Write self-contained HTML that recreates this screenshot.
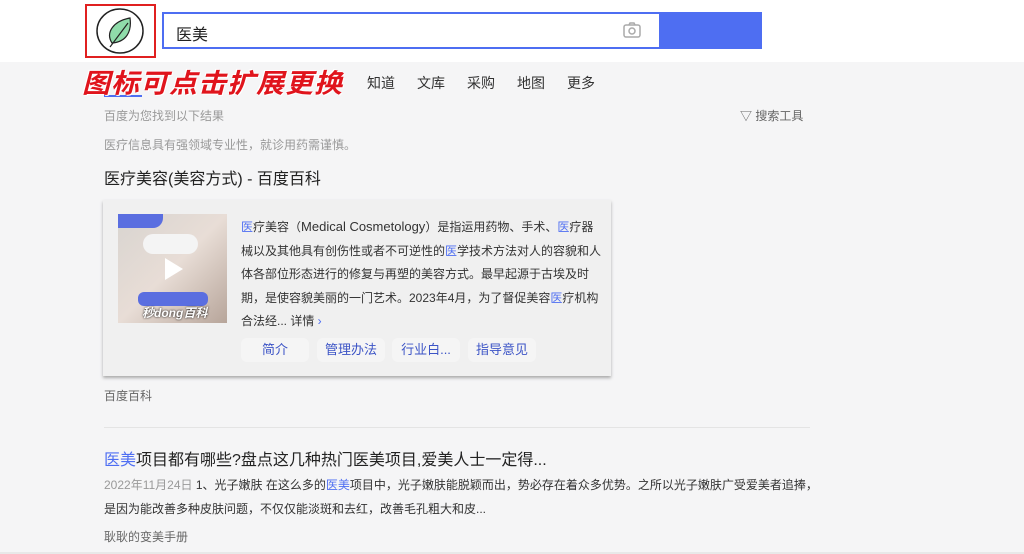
<!DOCTYPE html>
<html><head><meta charset="utf-8"><style>
*{margin:0;padding:0;box-sizing:border-box}
body{width:1024px;height:554px;overflow:hidden;background:#f5f5f6;font-family:"Liberation Sans","Noto Sans CJK SC",sans-serif;position:relative;color:#222}
.a{position:absolute;white-space:nowrap}
.hl{color:#4e6ef2}
</style></head><body>
<div class="a" style="left:0;top:0;width:1024px;height:62px;background:#fff"></div>
<div class="a" style="left:85px;top:4px;width:71px;height:54px;border:2px solid #e02020;background:#fff">
<svg width="67" height="50" viewBox="0 0 67 50"><ellipse cx="33" cy="25" rx="23" ry="22" fill="none" stroke="#222" stroke-width="1.5"/>
<path d="M25 37 C18 26 27 15 43 12 C45 26 39 36 25 37Z" fill="#8fdcaa" stroke="#222" stroke-width="1.2"/>
<path d="M23 41 L41 17" stroke="#222" stroke-width="1.2"/></svg></div>
<div class="a" style="left:162px;top:12px;width:500px;height:37px;border:2px solid #4e6ef2;border-right:none;background:#fff"></div>
<div class="a" style="left:176px;top:21px;font-size:16px;color:#222">医美</div>
<svg class="a" style="left:622px;top:21px" width="20" height="18" viewBox="0 0 20 18"><rect x="2" y="4" width="16" height="12" rx="2" fill="none" stroke="#aaa" stroke-width="1.5"/><path d="M7 4 L8 2 H12 L13 4" fill="none" stroke="#aaa" stroke-width="1.5"/><circle cx="10" cy="10" r="3" fill="none" stroke="#aaa" stroke-width="1.5"/></svg>
<div class="a" style="left:659px;top:12px;width:103px;height:37px;background:#4e6ef2"></div>
<div class="a" style="left:104px;top:95px;width:38px;height:2px;background:#4e6ef2"></div>
<div class="a" style="left:82px;top:62px;font-size:28px;font-weight:bold;font-style:italic;color:#e0141c;letter-spacing:1px;transform:scaleY(0.95);text-shadow:1px 1px 0 #fff,-1px -1px 0 #fff">图标可点击扩展更换</div>
<div class="a" style="left:367px;top:73px;font-size:14px;color:#333">知道</div>
<div class="a" style="left:417px;top:73px;font-size:14px;color:#333">文库</div>
<div class="a" style="left:467px;top:73px;font-size:14px;color:#333">采购</div>
<div class="a" style="left:517px;top:73px;font-size:14px;color:#333">地图</div>
<div class="a" style="left:567px;top:73px;font-size:14px;color:#333">更多</div>
<div class="a" style="left:104px;top:107px;font-size:12px;color:#999">百度为您找到以下结果</div>
<div class="a" style="left:740px;top:107px;font-size:12px;color:#666">▽ 搜索工具</div>
<div class="a" style="left:104px;top:136px;font-size:12px;color:#999">医疗信息具有强领域专业性，就诊用药需谨慎。</div>
<div class="a" style="left:104px;top:165px;font-size:16px;color:#222">医疗美容(美容方式) - 百度百科</div>
<div class="a" style="left:103px;top:200px;width:508px;height:176px;background:#f0f0f0;box-shadow:0 2px 3px #aaa"></div>
<div class="a" style="left:118px;top:214px;width:109px;height:109px;background:linear-gradient(135deg,#d8d4d0,#e8ddd6 50%,#b7a59a);overflow:hidden">
<div style="position:absolute;left:25px;top:20px;width:55px;height:20px;background:#f4f4f4;border-radius:10px"></div>
<div style="position:absolute;left:0;top:0;width:45px;height:14px;background:#5a6ee0;border-radius:0 0 10px 0"></div>
<div style="position:absolute;left:20px;top:78px;width:70px;height:14px;background:#5a6ee0;border-radius:6px"></div>
<div style="position:absolute;left:47px;top:44px;width:0;height:0;border-left:18px solid #fff;border-top:11px solid transparent;border-bottom:11px solid transparent"></div>
<div style="position:absolute;left:24px;top:90px;font-size:12px;font-weight:bold;font-style:italic;color:#fff;text-shadow:0 0 2px #000">秒dong百科</div></div>
<div class="a" style="left:241px;top:215px;font-size:12px;line-height:23.5px;color:#333">
<span class="hl">医</span>疗美容（<span style="font-size:13px">Medical Cosmetology</span>）是指运用药物、手术、<span class="hl">医</span>疗器<br>械以及其他具有创伤性或者不可逆性的<span class="hl">医</span>学技术方法对人的容貌和人<br>体各部位形态进行的修复与再塑的美容方式。最早起源于古埃及时<br>期，是使容貌美丽的一门艺术。2023年4月，为了督促美容<span class="hl">医</span>疗机构<br>合法经... 详情 <span class="hl">›</span></div>
<div class="a" style="left:241px;top:338px;width:68px;height:24px;background:#f5f5f5;border-radius:6px;font-size:13px;color:#3c54c6;text-align:center;line-height:24px">简介</div>
<div class="a" style="left:317px;top:338px;width:68px;height:24px;background:#f5f5f5;border-radius:6px;font-size:13px;color:#3c54c6;text-align:center;line-height:24px">管理办法</div>
<div class="a" style="left:392px;top:338px;width:68px;height:24px;background:#f5f5f5;border-radius:6px;font-size:13px;color:#3c54c6;text-align:center;line-height:24px">行业白...</div>
<div class="a" style="left:468px;top:338px;width:68px;height:24px;background:#f5f5f5;border-radius:6px;font-size:13px;color:#3c54c6;text-align:center;line-height:24px">指导意见</div>
<div class="a" style="left:104px;top:387px;font-size:12px;color:#666">百度百科</div>
<div class="a" style="left:104px;top:427px;width:706px;height:1px;background:#e4e4e4"></div>
<div class="a" style="left:104px;top:446px;font-size:16px;color:#222"><span class="hl">医美</span>项目都有哪些?盘点这几种热门医美项目,爱美人士一定得...</div>
<div class="a" style="left:104px;top:473px;font-size:12px;line-height:24px;color:#333"><span style="color:#999">2022年11月24日</span> 1、光子嫩肤 在这么多的<span class="hl">医美</span>项目中，光子嫩肤能脱颖而出，势必存在着众多优势。之所以光子嫩肤广受爱美者追捧，<br>是因为能改善多种皮肤问题，不仅仅能淡斑和去红，改善毛孔粗大和皮...</div>
<div class="a" style="left:104px;top:528px;font-size:12px;color:#666">耿耿的变美手册</div>
<div class="a" style="left:0;top:552px;width:1024px;height:2px;background:#e8e8e8"></div>
</body></html>
